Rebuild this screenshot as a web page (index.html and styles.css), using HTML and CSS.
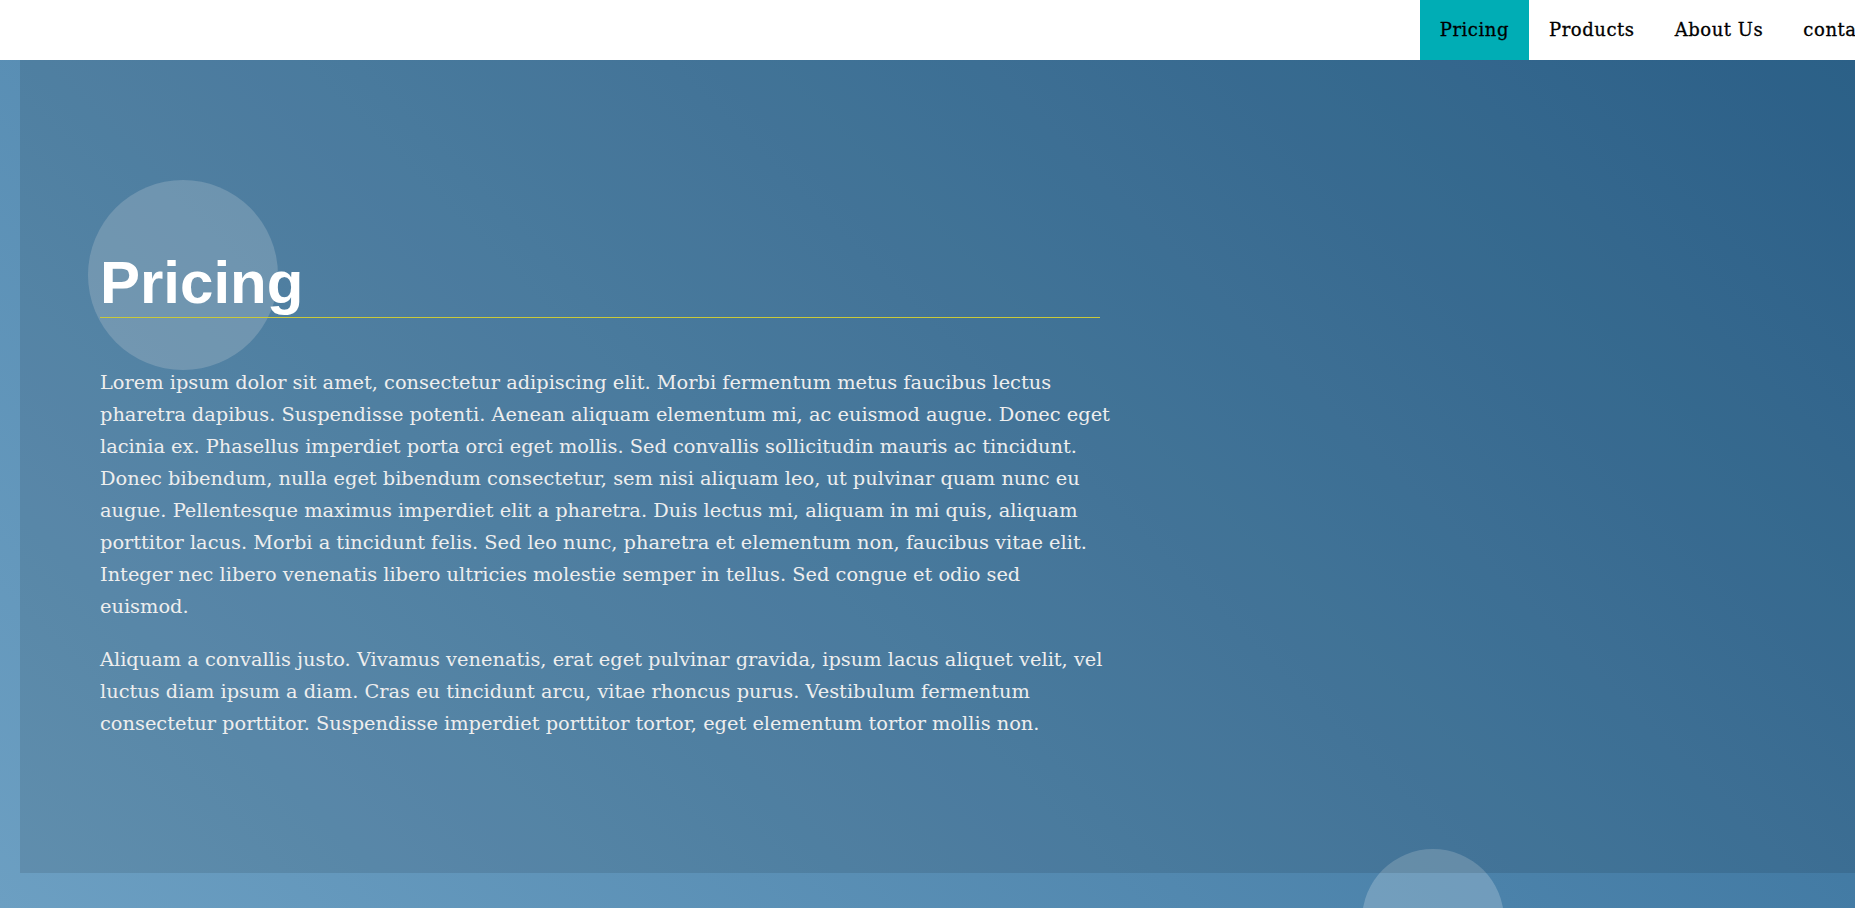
FILE: index.html
```html
<!DOCTYPE html>
<html lang="en">
<head>
<meta charset="utf-8">
<title>Pricing</title>
<link rel="stylesheet" href="styles.css">
</head>
<body>
<header class="site-header">
  <nav class="main-nav">
    <a class="nav-link is-active" href="#">Pricing</a>
    <a class="nav-link" href="#">Products</a>
    <a class="nav-link" href="#">About Us</a>
    <a class="nav-link" href="#">contact</a>
  </nav>
</header>
<main class="hero">
  <span class="bubble bubble-title"></span>
  <span class="bubble bubble-bottom"></span>
  <section class="panel">
    <div class="content">
      <h1 class="page-title">Pricing</h1>
      <p class="lead">Lorem ipsum dolor sit amet, consectetur adipiscing elit. Morbi fermentum metus faucibus lectus pharetra dapibus. Suspendisse potenti. Aenean aliquam elementum mi, ac euismod augue. Donec eget lacinia ex. Phasellus imperdiet porta orci eget mollis. Sed convallis sollicitudin mauris ac tincidunt. Donec bibendum, nulla eget bibendum consectetur, sem nisi aliquam leo, ut pulvinar quam nunc eu augue. Pellentesque maximus imperdiet elit a pharetra. Duis lectus mi, aliquam in mi quis, aliquam porttitor lacus. Morbi a tincidunt felis. Sed leo nunc, pharetra et elementum non, faucibus vitae elit. Integer nec libero venenatis libero ultricies molestie semper in tellus. Sed congue et odio sed euismod.</p>
      <p class="lead">Aliquam a convallis justo. Vivamus venenatis, erat eget pulvinar gravida, ipsum lacus aliquet velit, vel luctus diam ipsum a diam. Cras eu tincidunt arcu, vitae rhoncus purus. Vestibulum fermentum consectetur porttitor. Suspendisse imperdiet porttitor tortor, eget elementum tortor mollis non.</p>
    </div>
  </section>
</main>
</body>
</html>
```

FILE: styles.css
```css
* { box-sizing: border-box; }

html, body {
  margin: 0;
  padding: 0;
  overflow: hidden;
}

body {
  font-family: "DejaVu Serif", "Liberation Serif", serif;
  background: #ffffff;
}

.site-header {
  height: 60px;
  background: #ffffff;
  display: flex;
  justify-content: flex-end;
}

.main-nav {
  display: flex;
  margin-right: -40px;
  flex-shrink: 0;
}

.nav-link {
  display: block;
  padding: 0 20px;
  line-height: 60px;
  height: 60px;
  font-family: "DejaVu Serif", serif;
  font-size: 18px;
  letter-spacing: 0.55px;
  color: #000000;
  text-decoration: none;
  white-space: nowrap;
  -webkit-text-stroke: 0.3px #000000;
}

.nav-link.is-active {
  background: #00adb5;
}

.hero {
  position: relative;
  height: 848px;
  overflow: hidden;
  background: linear-gradient(225deg, #316b97 0%, #6c9fc2 100%);
  display: flex;
  flex-direction: column;
}

.bubble {
  position: absolute;
  border-radius: 50%;
  background: rgba(255, 255, 255, 0.21);
  z-index: 0;
}

.bubble-title {
  left: 88px;
  top: 120px;
  width: 190px;
  height: 190px;
}

.bubble-bottom {
  left: 1362px;
  top: 789px;
  width: 142px;
  height: 142px;
}

.panel {
  position: relative;
  z-index: 1;
  margin-left: 20px;
  height: 813px;
  background: rgba(0, 0, 0, 0.1);
  padding: 188px 0 0 80px;
}

.content {
  width: 1011px;
}

.page-title {
  width: 1000px;
  margin: 0 0 49px;
  font-family: "Liberation Sans", Arial, sans-serif;
  font-weight: 700;
  font-size: 60px;
  line-height: normal;
  color: #ffffff;
  border-bottom: 1px solid #c9c93a;
}

.lead {
  margin: 0 0 21px;
  font-size: 19.36px;
  line-height: 32px;
  color: #eeeeee;
}
```
